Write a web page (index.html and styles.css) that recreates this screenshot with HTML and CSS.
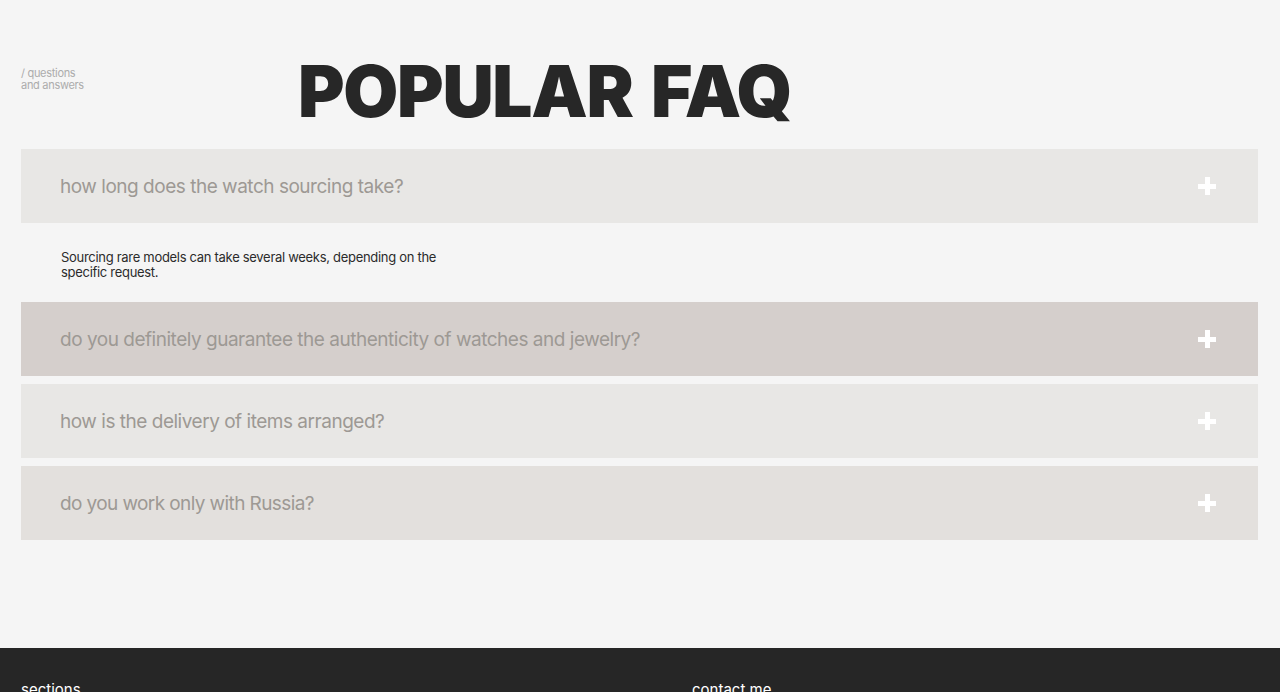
FILE: index.html
```html
<!DOCTYPE html>
<html lang="en">
<head>
<meta charset="utf-8">
<title>Popular FAQ</title>
<link rel="stylesheet" href="styles.css">
</head>
<body>
<main class="faq">
  <header class="faq-head">
    <div class="faq-label">/ questions<br>and answers</div>
    <h1 class="faq-title">POPULAR FAQ</h1>
  </header>
  <div class="faq-list">
    <div class="faq-item item-light">
      <span class="faq-q">how long does the watch sourcing take?</span>
      <span class="plus"></span>
    </div>
    <div class="faq-answer">Sourcing rare models can take several weeks, depending on the<br>specific request.</div>
    <div class="faq-item item-dark">
      <span class="faq-q">do you definitely guarantee the authenticity of watches and jewelry?</span>
      <span class="plus"></span>
    </div>
    <div class="faq-item item-light gap">
      <span class="faq-q">how is the delivery of items arranged?</span>
      <span class="plus"></span>
    </div>
    <div class="faq-item item-mid gap">
      <span class="faq-q q-tight">do you work only with Russia?</span>
      <span class="plus"></span>
    </div>
  </div>
</main>
<footer class="footer">
  <div class="footer-col">sections</div>
  <div class="footer-col">contact me</div>
</footer>
</body>
</html>
```

FILE: styles.css
```css
* { box-sizing: border-box; }
html, body { margin: 0; padding: 0; }
body {
  background: #f5f5f5;
  font-family: Inter, "Liberation Sans", Arial, sans-serif;
  color: #262626;
}
.faq {
  padding: 55px 22px 108px 21px;
}
.faq-head {
  display: grid;
  grid-template-columns: 277px 1fr;
  align-items: start;
  height: 94px;
}
.faq-label {
  font-size: 11px;
  line-height: 12px;
  color: #acacac;
  margin-top: 12px;
  letter-spacing: -0.3px;
}
.faq-title {
  margin: 0;
  font-size: 71px;
  line-height: 73px;
  font-weight: 900;
  letter-spacing: -0.018em;
  word-spacing: 0.08em;
  color: #272727;
}
.faq-list {
  display: flex;
  flex-direction: column;
}
.faq-item {
  height: 74px;
  display: flex;
  align-items: center;
  justify-content: space-between;
  padding: 0 42px 0 39px;
}
.faq-item.gap { margin-top: 8px; }
.item-light { background: #e8e7e5; }
.item-dark { background: #d5cfcc; }
.item-mid { background: #e3e0dd; }
.faq-q {
  font-size: 19px;
  color: #9d9994;
  letter-spacing: -0.48px;
}
.faq-q.q-tight { letter-spacing: -0.6px; }
.faq-answer {
  height: 79px;
  padding: 27px 0 0 40px;
  font-size: 13px;
  line-height: 15px;
  color: #2b2b2b;
  letter-spacing: -0.3px;
}
.plus {
  position: relative;
  width: 18px;
  height: 18px;
  flex: none;
}
.plus::before, .plus::after {
  content: "";
  position: absolute;
  background: #ffffff;
}
.plus::before { left: 0; right: 0; top: 6.5px; height: 5px; }
.plus::after { top: 0; bottom: 0; left: 6.5px; width: 5px; }
.footer {
  background: #262626;
  height: 120px;
  display: grid;
  grid-template-columns: 671px 1fr;
  padding: 32px 21px 0;
  color: #ffffff;
  font-size: 15px;
}
```
